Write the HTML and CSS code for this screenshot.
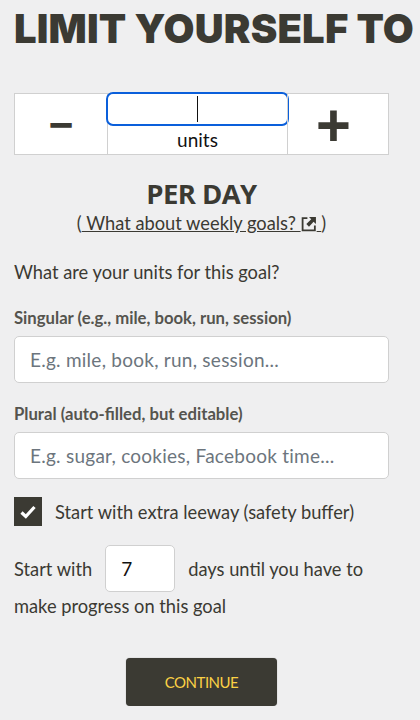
FILE: index.html
```html
<!DOCTYPE html>
<html>
<head>
	<title>Limit yourself</title>
	<meta charset="utf-8">
	<link rel="stylesheet" href="styles.css">
</head>
<body>
<div class="page">
	<h1>LIMIT YOURSELF TO</h1>

	<div class="stepper">
		<button class="step minus">&minus;</button>
		<div class="amount">
			<div class="amount-input"><span class="caret"></span></div>
			<div class="amount-unit">units</div>
		</div>
		<button class="step plus">+</button>
	</div>

	<h2>PER DAY</h2>
	<div class="weekly">(<a href="#"> What about weekly goals?
		<svg class="ext" width="16" height="16" viewBox="0 0 15 15">
			<path d="M6 2H1.5V13.5H13V9" fill="none" stroke="#3b3a33" stroke-width="1.7"/>
			<path d="M7.5 1H14V7.5L11.8 5.3L7.5 10L5 7.5L9.6 3.1Z" fill="#3b3a33"/>
		</svg>
	</a> )</div>

	<p class="question">What are your units for this goal?</p>

	<label class="field-label">Singular (e.g., mile, book, run, session)</label>
	<input class="field" type="text" placeholder="E.g. mile, book, run, session...">

	<label class="field-label">Plural (auto-filled, but editable)</label>
	<input class="field" type="text" placeholder="E.g. sugar, cookies, Facebook time...">

	<div class="leeway">
		<span class="check">
			<svg width="16" height="14" viewBox="0 0 16 14">
				<path d="M1.5 7.5L5.8 11.5L14.5 2" fill="none" stroke="#fff" stroke-width="3.2"/>
			</svg>
		</span>
		<span>Start with extra leeway (safety buffer)</span>
	</div>

	<div class="days">
		<span>Start with</span>
		<input class="days-input" type="text" value="7">
		<span>days until you have to</span>
	</div>
	<div class="days-end">make progress on this goal</div>

	<div class="actions">
		<button class="continue">CONTINUE</button>
	</div>
</div>
</body>
</html>
```

FILE: styles.css
```css
body{
	margin: 0;
	background: #efeff0;
	color: #3b3a33;
	font-family: Lato, "Noto Sans", sans-serif;
	font-size: 18.3px;
	overflow: hidden;
}
.page{
	width: 375px;
	padding: 0 0 0 14px;
}
h1{
	margin: 0;
	padding-top: 6px;
	height: 93px;
	box-sizing: border-box;
	font-family: Inter, sans-serif;
	font-size: 40px;
	line-height: 46px;
	font-weight: 900;
	letter-spacing: 0.15px;
	white-space: nowrap;
}
.stepper{
	display: flex;
	height: 62px;
	box-sizing: border-box;
	background: #fff;
	border: 1px solid #d0d0d0;
}
.step{
	border: 0;
	background: none;
	padding: 0;
	color: #3b3a33;
	font-family: "Open Sans", sans-serif;
	font-weight: 700;
	line-height: 60px;
}
.minus{
	width: 92px;
	font-size: 44px;
}
.plus{
	flex: 1;
	padding-right: 9px;
	border-left: 1px solid #d0d0d0;
	font-size: 62px;
}
.amount{
	width: 180px;
	box-sizing: border-box;
	border-left: 1px solid #d0d0d0;
	display: flex;
	flex-direction: column;
	align-items: center;
}
.amount-input{
	flex: none;
	width: 183px;
	height: 34px;
	margin-top: -2px;
	box-sizing: border-box;
	background: #fff;
	border: 2px solid #0a5fdb;
	border-radius: 7px;
	display: flex;
	justify-content: center;
	align-items: center;
}
.caret{
	width: 1px;
	height: 26px;
	background: #111;
}
.amount-unit{
	color: #111;
	font-size: 19px;
	line-height: 27px;
}
h2{
	margin: 21px 0 0;
	text-align: center;
	font-family: "Open Sans", sans-serif;
	font-size: 27.5px;
	line-height: 36px;
	font-weight: 700;
	letter-spacing: -0.6px;
}
.weekly{
	text-align: center;
	line-height: 24px;
	margin-top: -1px;
}
.weekly a{
	color: #3b3a33;
}
.ext{
	vertical-align: -2px;
}
.question{
	margin: 24px 0 0;
	line-height: 26px;
}
.field-label{
	display: block;
	margin: 23px 0 8px;
	color: #55544e;
	font-size: 16.7px;
	font-weight: 700;
	line-height: 20px;
}
.field + .field-label{
	margin-top: 21px;
}
.field{
	display: block;
	width: 100%;
	height: 47px;
	box-sizing: border-box;
	padding: 0 15px;
	background: #fff;
	border: 1px solid #d0d0d0;
	border-radius: 5px;
	font-family: inherit;
	font-size: 19px;
	letter-spacing: 0.25px;
}
.field::placeholder{
	color: #6c757d;
	opacity: 1;
}
.leeway{
	display: flex;
	align-items: center;
	gap: 13px;
	margin-top: 18px;
	height: 29px;
}
.check{
	width: 28px;
	height: 29px;
	background: #3b3a33;
	display: flex;
	align-items: center;
	justify-content: center;
}
.days{
	display: flex;
	align-items: center;
	gap: 13px;
	margin-top: 19px;
	white-space: nowrap;
}
.days-input{
	width: 70px;
	height: 47px;
	box-sizing: border-box;
	padding: 0 15px;
	background: #fff;
	border: 1px solid #d0d0d0;
	border-radius: 5px;
	color: #111;
	font-family: inherit;
	font-size: 19px;
}
.days-end{
	margin-top: 1px;
	line-height: 27px;
}
.actions{
	display: flex;
	justify-content: center;
	margin-top: 38px;
}
.continue{
	width: 151px;
	height: 48px;
	background: #3b3a33;
	border: 0;
	border-radius: 4px;
	box-shadow: 0 0 1px #888;
	color: #fbd145;
	font-family: inherit;
	font-size: 15px;
	letter-spacing: -0.5px;
}
```
